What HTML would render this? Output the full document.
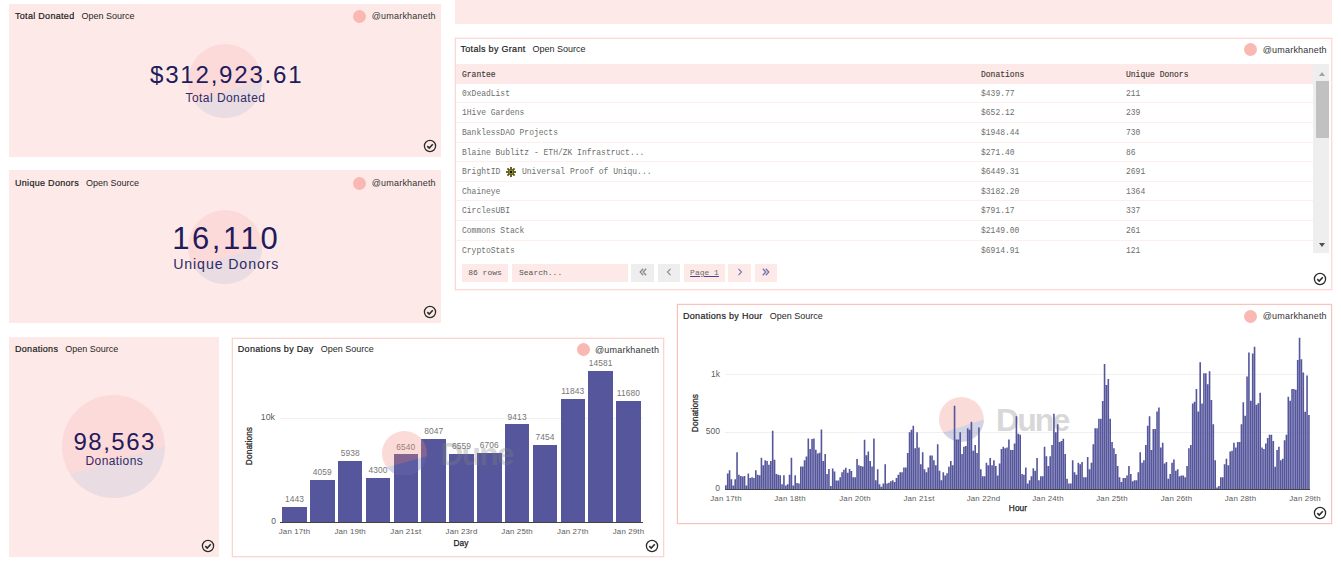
<!DOCTYPE html><html><head><meta charset="utf-8"><style>
*{margin:0;padding:0}
html,body{width:1341px;height:574px;overflow:hidden;background:#fff;position:relative;font-family:"Liberation Sans",sans-serif}
div,svg{position:absolute}
.pk{background:#fdeae8}
.wc{background:#fff;border:1px solid #fbd3d0}
.t{font-size:9px;line-height:12px;color:#1a1a1a;white-space:nowrap}
.t b{font-weight:normal;font-size:9px;color:#1c1c1c;-webkit-text-stroke:0.2px #1c1c1c;letter-spacing:0.3px}
.t .os{margin-left:7px;color:#1f1f1f}
.au{font-size:9px;line-height:12px;color:#333;letter-spacing:0.2px;white-space:nowrap;display:flex;align-items:center}
.au i{display:inline-block;width:13px;height:13px;border-radius:50%;background:#f9b8b1;margin-right:5.5px}
.num{text-align:center;color:#1f1b5c;white-space:nowrap;line-height:1}
.lab{text-align:center;color:#2f2b66;white-space:nowrap;line-height:1}
.th{font-family:"Liberation Mono",monospace;font-size:9px;line-height:10px;margin-top:-4.2px;color:#3d3835;-webkit-text-stroke:0.15px #3d3835;white-space:nowrap;transform:scaleX(0.89);transform-origin:0 50%}
.td{font-family:"Liberation Mono",monospace;font-size:9.2px;line-height:10px;margin-top:-4.4px;color:#6e6e6e;white-space:nowrap;transform:scaleX(0.87);transform-origin:0 50%}
.thd{background:#fdeae8}
.rl{height:1px;background:#fdefee}
.cb{top:264px;height:18px;box-sizing:border-box;padding-bottom:1.5px;background:#fdeae8;font-family:"Liberation Mono",monospace;font-size:8px;color:#555;display:flex;align-items:center;justify-content:center;white-space:nowrap}
.cb.g{background:#eeeeee;color:#777;font-size:13px}
.cb u{color:#6a6a6a;text-decoration-color:#4a4590;text-decoration-thickness:1.3px}
.gl{height:1px;background:#f0f0f0}
.ax{height:1px;background:#444}
.bar{background:#55569c}
.vl{width:40px;text-align:center;font-size:8.4px;line-height:10px;color:#767676;letter-spacing:0.1px}
.yl{text-align:right;font-size:8.5px;line-height:10px;color:#5c5c5c}
.xl{width:60px;text-align:center;font-size:7.9px;line-height:10px;color:#5c5c5c;letter-spacing:0.15px}
.axt{text-align:center;font-size:8.3px;line-height:10px;color:#222;-webkit-text-stroke:0.25px #222;letter-spacing:0.1px}
.rot{transform:rotate(-90deg)}
.wm{color:#808080;font-weight:bold;font-size:32px;letter-spacing:-1.9px;line-height:1}
.ck{position:absolute}
</style></head><body><div class="pk" style="left:9px;top:4px;width:431.5px;height:153px"></div><svg style="position:absolute;left:187.75px;top:43.5px;opacity:1.0" width="74" height="74" viewBox="187.75 43.5 74 74"><circle cx="224.75" cy="80.5" r="37" fill="#fcdad9"/><path d="M193.72 100.65 A37 37 0 0 0 261.74 79.85 Z" fill="#e9dce3"/></svg><div class="t" style="left:15px;top:9.6px"><b>Total Donated</b><span class="os">Open Source</span></div><div class="au" style="right:905.2px;top:9.6px"><i></i>@umarkhaneth</div><div class="num" style="left:150px;top:62.6px;font-size:24.1px;letter-spacing:1.76px">$312,923.61</div><div class="lab" style="left:185.5px;top:91.5px;font-size:12px;letter-spacing:0.45px">Total Donated</div><svg class="ck" style="left:422.9px;top:138.8px" width="14" height="14" viewBox="0 0 14 14"><circle cx="7" cy="7" r="5.6" fill="none" stroke="#2b2b2b" stroke-width="1.3"/><path d="M4.3 7.2 L6.2 9 L9.8 5.2" fill="none" stroke="#2b2b2b" stroke-width="1.6"/></svg><div class="pk" style="left:9px;top:170.3px;width:431.5px;height:153px"></div><svg style="position:absolute;left:187.75px;top:209.8px;opacity:1.0" width="74" height="74" viewBox="187.75 209.8 74 74"><circle cx="224.75" cy="246.8" r="37" fill="#fcdad9"/><path d="M193.72 266.95 A37 37 0 0 0 261.74 246.15 Z" fill="#e9dce3"/></svg><div class="t" style="left:15px;top:176.70000000000002px"><b>Unique Donors</b><span class="os">Open Source</span></div><div class="au" style="right:905.2px;top:176.70000000000002px"><i></i>@umarkhaneth</div><div class="num" style="left:172.2px;top:223.4px;font-size:31px;letter-spacing:2.6px">16,110</div><div class="lab" style="left:173.2px;top:256.7px;font-size:14.2px;letter-spacing:0.88px">Unique Donors</div><svg class="ck" style="left:422.9px;top:305.1px" width="14" height="14" viewBox="0 0 14 14"><circle cx="7" cy="7" r="5.6" fill="none" stroke="#2b2b2b" stroke-width="1.3"/><path d="M4.3 7.2 L6.2 9 L9.8 5.2" fill="none" stroke="#2b2b2b" stroke-width="1.6"/></svg><div class="pk" style="left:9px;top:337px;width:209.8px;height:219.8px"></div><svg style="position:absolute;left:62.400000000000006px;top:395.4px;opacity:1.0" width="103.0" height="103.0" viewBox="62.400000000000006 395.4 103.0 103.0"><circle cx="113.9" cy="446.9" r="51.5" fill="#fcdad9"/><path d="M70.71 474.95 A51.5 51.5 0 0 0 165.39 446.00 Z" fill="#e9dce3"/></svg><div class="t" style="left:15px;top:342.6px"><b>Donations</b><span class="os">Open Source</span></div><div class="num" style="left:73.5px;top:429.5px;font-size:24px;letter-spacing:1.5px">98,563</div><div class="lab" style="left:85.5px;top:454.6px;font-size:12px;letter-spacing:0.4px">Donations</div><svg class="ck" style="left:201.20000000000002px;top:538.5999999999999px" width="14" height="14" viewBox="0 0 14 14"><circle cx="7" cy="7" r="5.6" fill="none" stroke="#2b2b2b" stroke-width="1.3"/><path d="M4.3 7.2 L6.2 9 L9.8 5.2" fill="none" stroke="#2b2b2b" stroke-width="1.6"/></svg><div class="pk" style="left:454.5px;top:0px;width:877.4px;height:23.7px"></div><div class="wc" style="left:454.5px;top:37.5px;width:875px;height:250px;border-color:#fcd9d6;box-shadow:0 0 0 0.6px #fde9e7"></div><div class="t" style="left:460.5px;top:43.1px"><b>Totals by Grant</b><span class="os">Open Source</span></div><div class="au" style="right:14.2px;top:43.1px"><i></i>@umarkhaneth</div><div class="thd" style="left:455.5px;top:64px;width:857.5px;height:20px"></div><div class="th" style="left:462px;top:74px">Grantee</div><div class="th" style="left:981px;top:74px">Donations</div><div class="th" style="left:1126px;top:74px">Unique Donors</div><div class="rl" style="left:455.5px;top:102.3px;width:857.5px"></div><div class="td" style="left:462px;top:93.1px">0xDeadList</div><div class="td" style="left:981px;top:93.1px">$439.77</div><div class="td" style="left:1126px;top:93.1px">211</div><div class="rl" style="left:455.5px;top:121.9px;width:857.5px"></div><div class="td" style="left:462px;top:112.7px">1Hive Gardens</div><div class="td" style="left:981px;top:112.7px">$652.12</div><div class="td" style="left:1126px;top:112.7px">239</div><div class="rl" style="left:455.5px;top:141.5px;width:857.5px"></div><div class="td" style="left:462px;top:132.3px">BanklessDAO Projects</div><div class="td" style="left:981px;top:132.3px">$1948.44</div><div class="td" style="left:1126px;top:132.3px">730</div><div class="rl" style="left:455.5px;top:161.1px;width:857.5px"></div><div class="td" style="left:462px;top:151.9px">Blaine Bublitz - ETH/ZK Infrastruct...</div><div class="td" style="left:981px;top:151.9px">$271.40</div><div class="td" style="left:1126px;top:151.9px">86</div><div class="rl" style="left:455.5px;top:180.7px;width:857.5px"></div><div class="td" style="left:462px;top:171.5px">BrightID</div><svg style="left:506px;top:166.6px" width="10" height="10" viewBox="0 0 10 10"><rect x="4.1" y="0" width="1.8" height="2.6" fill="#55501a" transform="rotate(0 5 5)"/><rect x="4.1" y="0" width="1.8" height="2.6" fill="#55501a" transform="rotate(45 5 5)"/><rect x="4.1" y="0" width="1.8" height="2.6" fill="#55501a" transform="rotate(90 5 5)"/><rect x="4.1" y="0" width="1.8" height="2.6" fill="#55501a" transform="rotate(135 5 5)"/><rect x="4.1" y="0" width="1.8" height="2.6" fill="#55501a" transform="rotate(180 5 5)"/><rect x="4.1" y="0" width="1.8" height="2.6" fill="#55501a" transform="rotate(225 5 5)"/><rect x="4.1" y="0" width="1.8" height="2.6" fill="#55501a" transform="rotate(270 5 5)"/><rect x="4.1" y="0" width="1.8" height="2.6" fill="#55501a" transform="rotate(315 5 5)"/><circle cx="5" cy="5" r="3.1" fill="#5a5518"/><circle cx="5" cy="5" r="2.2" fill="#9c9a2a"/><circle cx="5" cy="5" r="1.2" fill="#111"/></svg><div class="td" style="left:521.5px;top:171.5px">Universal Proof of Uniqu...</div><div class="td" style="left:981px;top:171.5px">$6449.31</div><div class="td" style="left:1126px;top:171.5px">2691</div><div class="rl" style="left:455.5px;top:200.3px;width:857.5px"></div><div class="td" style="left:462px;top:191.1px">Chaineye</div><div class="td" style="left:981px;top:191.1px">$3182.20</div><div class="td" style="left:1126px;top:191.1px">1364</div><div class="rl" style="left:455.5px;top:219.9px;width:857.5px"></div><div class="td" style="left:462px;top:210.7px">CirclesUBI</div><div class="td" style="left:981px;top:210.7px">$791.17</div><div class="td" style="left:1126px;top:210.7px">337</div><div class="rl" style="left:455.5px;top:239.5px;width:857.5px"></div><div class="td" style="left:462px;top:230.3px">Commons Stack</div><div class="td" style="left:981px;top:230.3px">$2149.00</div><div class="td" style="left:1126px;top:230.3px">261</div><div class="td" style="left:462px;top:249.9px">CryptoStats</div><div class="td" style="left:981px;top:249.9px">$6914.91</div><div class="td" style="left:1126px;top:249.9px">121</div><div style="position:absolute;left:1313px;top:64px;width:16px;height:189px;background:#eeeeee"></div><div style="position:absolute;left:1316px;top:81px;width:13px;height:57px;background:#c1c1c1"></div><div style="position:absolute;left:1319px;top:71.5px;width:0;height:0;border-left:3.5px solid transparent;border-right:3.5px solid transparent;border-bottom:4px solid #a3a3a3"></div><div style="position:absolute;left:1319px;top:242.5px;width:0;height:0;border-left:3.5px solid transparent;border-right:3.5px solid transparent;border-top:4px solid #505050"></div><div class="cb" style="left:462px;width:46px">86 rows</div><div class="cb" style="left:512px;width:116px;justify-content:flex-start;padding-left:7px;box-sizing:border-box">Search...</div><div class="cb g" style="left:631px;width:23px"><svg style="position:static" width="8" height="8" viewBox="0 0 8 8"><path d="M4.2 0.8 L1.2 4 L4.2 7.2 M7.2 0.8 L4.2 4 L7.2 7.2" fill="none" stroke="#8a8a8a" stroke-width="1.3"/></svg></div><div class="cb g" style="left:658px;width:22px"><svg style="position:static" width="8" height="8" viewBox="0 0 8 8"><path d="M5.5 0.8 L2.5 4 L5.5 7.2" fill="none" stroke="#8a8a8a" stroke-width="1.1"/></svg></div><div class="cb" style="left:684px;width:41px"><u>Page 1</u></div><div class="cb" style="left:728px;width:23px"><svg style="position:static" width="8" height="8" viewBox="0 0 8 8"><path d="M2.5 0.8 L5.5 4 L2.5 7.2" fill="none" stroke="#7470b0" stroke-width="1.1"/></svg></div><div class="cb" style="left:755px;width:22px"><svg style="position:static" width="8" height="8" viewBox="0 0 8 8"><path d="M0.8 0.8 L3.8 4 L0.8 7.2 M3.8 0.8 L6.8 4 L3.8 7.2" fill="none" stroke="#7470b0" stroke-width="1.3"/></svg></div><svg class="ck" style="left:1313.4px;top:271.7px" width="14" height="14" viewBox="0 0 14 14"><circle cx="7" cy="7" r="5.6" fill="none" stroke="#2b2b2b" stroke-width="1.3"/><path d="M4.3 7.2 L6.2 9 L9.8 5.2" fill="none" stroke="#2b2b2b" stroke-width="1.6"/></svg><div class="wc" style="left:231.8px;top:337.7px;width:430px;height:217px;border-color:#fbd3cf;box-shadow:0 0 0 0.6px #fde9e7"></div><div class="t" style="left:237.8px;top:343.3px"><b>Donations by Day</b><span class="os">Open Source</span></div><div class="au" style="right:681.9000000000001px;top:343.3px"><i></i>@umarkhaneth</div><div class="gl" style="left:280px;top:418.4px;width:363px"></div><div class="bar" style="left:282.30px;top:507.22px;width:24.4px;height:14.98px"></div><div class="vl" style="left:274.50px;top:494.42px">1443</div><div class="bar" style="left:310.13px;top:480.07px;width:24.4px;height:42.13px"></div><div class="vl" style="left:302.33px;top:467.27px">4059</div><div class="bar" style="left:337.96px;top:460.56px;width:24.4px;height:61.64px"></div><div class="vl" style="left:330.16px;top:447.76px">5938</div><div class="bar" style="left:365.79px;top:477.57px;width:24.4px;height:44.63px"></div><div class="vl" style="left:357.99px;top:464.77px">4300</div><div class="bar" style="left:393.62px;top:454.31px;width:24.4px;height:67.89px"></div><div class="vl" style="left:385.82px;top:441.51px">6540</div><div class="bar" style="left:421.45px;top:438.67px;width:24.4px;height:83.53px"></div><div class="vl" style="left:413.65px;top:425.87px">8047</div><div class="bar" style="left:449.28px;top:454.12px;width:24.4px;height:68.08px"></div><div class="vl" style="left:441.48px;top:441.32px">6559</div><div class="bar" style="left:477.11px;top:452.59px;width:24.4px;height:69.61px"></div><div class="vl" style="left:469.31px;top:439.79px">6706</div><div class="bar" style="left:504.94px;top:424.49px;width:24.4px;height:97.71px"></div><div class="vl" style="left:497.14px;top:411.69px">9413</div><div class="bar" style="left:532.77px;top:444.83px;width:24.4px;height:77.37px"></div><div class="vl" style="left:524.97px;top:432.03px">7454</div><div class="bar" style="left:560.60px;top:399.27px;width:24.4px;height:122.93px"></div><div class="vl" style="left:552.80px;top:386.47px">11843</div><div class="bar" style="left:588.43px;top:370.85px;width:24.4px;height:151.35px"></div><div class="vl" style="left:580.63px;top:358.05px">14581</div><div class="bar" style="left:616.26px;top:400.96px;width:24.4px;height:121.24px"></div><div class="vl" style="left:608.46px;top:388.16px">11680</div><div style="left:0;top:0;width:1341px;height:574px;opacity:0.3"><svg style="position:absolute;left:381.90000000000003px;top:430.70000000000005px;opacity:1.0" width="44.8" height="44.8" viewBox="381.90000000000003 430.70000000000005 44.8 44.8"><circle cx="404.3" cy="453.1" r="22.4" fill="#f28a7d"/><path d="M386.65 466.89 A22.4 22.4 0 0 0 426.53 455.83 Z" fill="#7070b0"/></svg><div class="wm" style="left:440.3px;top:437.5px">Dune</div></div><div class="ax" style="left:280px;top:522.2px;width:363px"></div><div class="yl" style="left:262px;top:516.2px;width:14px">0</div><div class="yl" style="left:250px;top:412.4px;width:25px;font-size:8.8px">10k</div><div class="xl" style="left:264.5px;top:526.6px">Jan 17th</div><div class="xl" style="left:320.2px;top:526.6px">Jan 19th</div><div class="xl" style="left:375.8px;top:526.6px">Jan 21st</div><div class="xl" style="left:431.5px;top:526.6px">Jan 23rd</div><div class="xl" style="left:487.1px;top:526.6px">Jan 25th</div><div class="xl" style="left:542.8px;top:526.6px">Jan 27th</div><div class="xl" style="left:598.5px;top:526.6px">Jan 29th</div><div class="axt" style="left:431px;top:538px;width:60px">Day</div><div class="axt rot" style="left:219px;top:441px;width:60px">Donations</div><svg class="ck" style="left:645.4px;top:539.2px" width="14" height="14" viewBox="0 0 14 14"><circle cx="7" cy="7" r="5.6" fill="none" stroke="#2b2b2b" stroke-width="1.3"/><path d="M4.3 7.2 L6.2 9 L9.8 5.2" fill="none" stroke="#2b2b2b" stroke-width="1.6"/></svg><div class="wc" style="left:677px;top:304.3px;width:652.5px;height:217.8px;border-color:#f9c3bd;box-shadow:0 0 0 0.5px #fde3e0"></div><div class="t" style="left:683px;top:309.90000000000003px"><b>Donations by Hour</b><span class="os">Open Source</span></div><div class="au" style="right:14.2px;top:309.90000000000003px"><i></i>@umarkhaneth</div><div class="gl" style="left:725px;top:431.6px;width:585px"></div><div class="gl" style="left:725px;top:374.3px;width:585px"></div><div style="left:0;top:0;width:1341px;height:574px;opacity:0.3"><svg style="position:absolute;left:939.2px;top:397.1px;opacity:1.0" width="44.8" height="44.8" viewBox="939.2 397.1 44.8 44.8"><circle cx="961.6" cy="419.5" r="22.4" fill="#f28a7d"/><path d="M943.48 432.67 A22.4 22.4 0 0 0 984.00 419.50 Z" fill="#7070b0"/></svg><div class="wm" style="left:996px;top:404.3px">Dune</div></div><svg style="position:absolute;left:725px;top:318.8px" width="585" height="170" viewBox="0 0 585 170"><path d="M0.00 166.15h1.61V170h-1.61zM1.88 154.50h1.61V170h-1.61zM3.75 151.36h1.61V170h-1.61zM5.62 160.13h1.61V170h-1.61zM7.50 166.40h1.61V170h-1.61zM9.38 160.13h1.61V170h-1.61zM11.25 133.18h1.61V170h-1.61zM13.12 155.74h1.61V170h-1.61zM15.00 157.00h1.61V170h-1.61zM16.88 157.62h1.61V170h-1.61zM18.75 157.00h1.61V170h-1.61zM20.62 166.40h1.61V170h-1.61zM22.50 154.50h1.61V170h-1.61zM24.38 158.88h1.61V170h-1.61zM26.25 158.25h1.61V170h-1.61zM28.12 158.88h1.61V170h-1.61zM30.00 151.36h1.61V170h-1.61zM31.88 155.74h1.61V170h-1.61zM33.75 156.37h1.61V170h-1.61zM35.62 138.82h1.61V170h-1.61zM37.50 146.34h1.61V170h-1.61zM39.38 141.33h1.61V170h-1.61zM41.25 141.95h1.61V170h-1.61zM43.12 145.71h1.61V170h-1.61zM45.00 141.95h1.61V170h-1.61zM46.88 111.86h1.61V170h-1.61zM48.75 140.70h1.61V170h-1.61zM50.62 155.12h1.61V170h-1.61zM52.50 155.74h1.61V170h-1.61zM54.38 156.37h1.61V170h-1.61zM56.25 165.15h1.61V170h-1.61zM58.12 156.37h1.61V170h-1.61zM60.00 166.40h1.61V170h-1.61zM61.88 165.15h1.61V170h-1.61zM63.75 155.74h1.61V170h-1.61zM65.62 138.82h1.61V170h-1.61zM67.50 166.40h1.61V170h-1.61zM69.38 156.37h1.61V170h-1.61zM71.25 163.90h1.61V170h-1.61zM73.12 164.53h1.61V170h-1.61zM75.00 147.59h1.61V170h-1.61zM76.88 147.59h1.61V170h-1.61zM78.75 141.33h1.61V170h-1.61zM80.62 137.56h1.61V170h-1.61zM82.50 119.38h1.61V170h-1.61zM84.38 130.04h1.61V170h-1.61zM86.25 120.01h1.61V170h-1.61zM88.12 119.38h1.61V170h-1.61zM90.00 130.67h1.61V170h-1.61zM91.88 134.42h1.61V170h-1.61zM93.75 133.81h1.61V170h-1.61zM95.62 110.61h1.61V170h-1.61zM97.50 141.95h1.61V170h-1.61zM99.38 135.05h1.61V170h-1.61zM101.25 155.12h1.61V170h-1.61zM103.12 150.10h1.61V170h-1.61zM105.00 167.03h1.61V170h-1.61zM106.88 149.47h1.61V170h-1.61zM108.75 152.61h1.61V170h-1.61zM110.62 161.39h1.61V170h-1.61zM112.50 161.39h1.61V170h-1.61zM114.38 158.25h1.61V170h-1.61zM116.25 153.24h1.61V170h-1.61zM118.12 150.73h1.61V170h-1.61zM120.00 148.85h1.61V170h-1.61zM121.88 153.87h1.61V170h-1.61zM123.75 150.10h1.61V170h-1.61zM125.62 151.99h1.61V170h-1.61zM127.50 158.25h1.61V170h-1.61zM129.38 158.25h1.61V170h-1.61zM131.25 140.07h1.61V170h-1.61zM133.12 146.34h1.61V170h-1.61zM135.00 146.96h1.61V170h-1.61zM136.88 147.59h1.61V170h-1.61zM138.75 120.64h1.61V170h-1.61zM140.62 136.31h1.61V170h-1.61zM142.50 132.55h1.61V170h-1.61zM144.38 141.95h1.61V170h-1.61zM146.25 147.59h1.61V170h-1.61zM148.12 119.38h1.61V170h-1.61zM150.00 161.36h1.61V170h-1.61zM151.88 150.13h1.61V170h-1.61zM153.75 165.36h1.61V170h-1.61zM155.62 167.78h1.61V170h-1.61zM157.50 164.56h1.61V170h-1.61zM159.38 145.33h1.61V170h-1.61zM161.25 164.56h1.61V170h-1.61zM163.12 163.76h1.61V170h-1.61zM165.00 162.16h1.61V170h-1.61zM166.88 161.36h1.61V170h-1.61zM168.75 162.96h1.61V170h-1.61zM170.62 158.95h1.61V170h-1.61zM172.50 155.74h1.61V170h-1.61zM174.38 153.34h1.61V170h-1.61zM176.25 153.34h1.61V170h-1.61zM178.12 148.53h1.61V170h-1.61zM180.00 148.53h1.61V170h-1.61zM181.88 134.10h1.61V170h-1.61zM183.75 113.27h1.61V170h-1.61zM185.62 110.86h1.61V170h-1.61zM187.50 106.85h1.61V170h-1.61zM189.38 129.30h1.61V170h-1.61zM191.25 113.27h1.61V170h-1.61zM193.12 128.49h1.61V170h-1.61zM195.00 145.33h1.61V170h-1.61zM196.88 133.30h1.61V170h-1.61zM198.75 150.13h1.61V170h-1.61zM200.62 153.34h1.61V170h-1.61zM202.50 148.53h1.61V170h-1.61zM204.38 136.51h1.61V170h-1.61zM206.25 136.51h1.61V170h-1.61zM208.12 141.32h1.61V170h-1.61zM210.00 146.13h1.61V170h-1.61zM211.88 125.29h1.61V170h-1.61zM213.75 151.74h1.61V170h-1.61zM215.62 161.36h1.61V170h-1.61zM217.50 153.34h1.61V170h-1.61zM219.38 156.55h1.61V170h-1.61zM221.25 154.14h1.61V170h-1.61zM223.12 147.73h1.61V170h-1.61zM225.00 142.12h1.61V170h-1.61zM226.88 146.13h1.61V170h-1.61zM228.75 86.82h1.61V170h-1.61zM230.62 120.48h1.61V170h-1.61zM232.50 120.48h1.61V170h-1.61zM234.38 113.27h1.61V170h-1.61zM236.25 134.91h1.61V170h-1.61zM238.12 127.69h1.61V170h-1.61zM240.00 126.89h1.61V170h-1.61zM241.88 109.26h1.61V170h-1.61zM243.75 110.86h1.61V170h-1.61zM245.62 102.85h1.61V170h-1.61zM247.50 131.70h1.61V170h-1.61zM249.38 126.09h1.61V170h-1.61zM251.25 134.10h1.61V170h-1.61zM253.12 108.46h1.61V170h-1.61zM255.00 150.13h1.61V170h-1.61zM256.88 157.35h1.61V170h-1.61zM258.75 157.35h1.61V170h-1.61zM260.62 143.72h1.61V170h-1.61zM262.50 146.13h1.61V170h-1.61zM264.38 138.91h1.61V170h-1.61zM266.25 146.13h1.61V170h-1.61zM268.12 141.32h1.61V170h-1.61zM270.00 146.93h1.61V170h-1.61zM271.88 156.55h1.61V170h-1.61zM273.75 144.52h1.61V170h-1.61zM275.62 130.10h1.61V170h-1.61zM277.50 127.69h1.61V170h-1.61zM279.38 129.30h1.61V170h-1.61zM281.25 128.49h1.61V170h-1.61zM283.12 120.48h1.61V170h-1.61zM285.00 130.90h1.61V170h-1.61zM286.88 130.90h1.61V170h-1.61zM288.75 124.49h1.61V170h-1.61zM290.62 97.24h1.61V170h-1.61zM292.50 114.87h1.61V170h-1.61zM294.38 115.67h1.61V170h-1.61zM296.25 154.94h1.61V170h-1.61zM298.12 155.74h1.61V170h-1.61zM300.00 148.53h1.61V170h-1.61zM301.88 164.56h1.61V170h-1.61zM303.75 161.36h1.61V170h-1.61zM305.62 157.35h1.61V170h-1.61zM307.50 149.33h1.61V170h-1.61zM309.38 151.74h1.61V170h-1.61zM311.25 138.91h1.61V170h-1.61zM313.12 161.36h1.61V170h-1.61zM315.00 157.35h1.61V170h-1.61zM316.88 157.35h1.61V170h-1.61zM318.75 127.69h1.61V170h-1.61zM320.62 137.31h1.61V170h-1.61zM322.50 146.93h1.61V170h-1.61zM324.38 137.31h1.61V170h-1.61zM326.25 126.09h1.61V170h-1.61zM328.12 94.83h1.61V170h-1.61zM330.00 113.27h1.61V170h-1.61zM331.88 105.25h1.61V170h-1.61zM333.75 122.88h1.61V170h-1.61zM335.62 122.08h1.61V170h-1.61zM337.50 119.68h1.61V170h-1.61zM339.38 134.91h1.61V170h-1.61zM341.25 159.75h1.61V170h-1.61zM343.12 164.56h1.61V170h-1.61zM345.00 164.56h1.61V170h-1.61zM346.88 141.32h1.61V170h-1.61zM348.75 153.34h1.61V170h-1.61zM350.62 155.74h1.61V170h-1.61zM352.50 143.72h1.61V170h-1.61zM354.38 145.33h1.61V170h-1.61zM356.25 142.92h1.61V170h-1.61zM358.12 158.15h1.61V170h-1.61zM360.00 158.15h1.61V170h-1.61zM361.88 138.11h1.61V170h-1.61zM363.75 150.13h1.61V170h-1.61zM365.62 143.72h1.61V170h-1.61zM367.50 125.29h1.61V170h-1.61zM369.38 109.26h1.61V170h-1.61zM371.25 109.26h1.61V170h-1.61zM373.12 99.80h1.61V170h-1.61zM375.00 99.64h1.61V170h-1.61zM376.88 82.10h1.61V170h-1.61zM378.75 44.90h1.61V170h-1.61zM380.62 66.10h1.61V170h-1.61zM382.50 60.10h1.61V170h-1.61zM384.38 99.64h1.61V170h-1.61zM386.25 122.88h1.61V170h-1.61zM388.12 129.30h1.61V170h-1.61zM390.00 134.91h1.61V170h-1.61zM391.88 146.93h1.61V170h-1.61zM393.75 158.15h1.61V170h-1.61zM395.62 162.96h1.61V170h-1.61zM397.50 158.95h1.61V170h-1.61zM399.38 158.95h1.61V170h-1.61zM401.25 156.55h1.61V170h-1.61zM403.12 146.93h1.61V170h-1.61zM405.00 154.94h1.61V170h-1.61zM406.88 162.16h1.61V170h-1.61zM408.75 161.36h1.61V170h-1.61zM410.62 161.36h1.61V170h-1.61zM412.50 153.34h1.61V170h-1.61zM414.38 133.30h1.61V170h-1.61zM416.25 143.72h1.61V170h-1.61zM418.12 141.32h1.61V170h-1.61zM420.00 126.09h1.61V170h-1.61zM421.88 106.85h1.61V170h-1.61zM423.75 97.24h1.61V170h-1.61zM425.62 130.90h1.61V170h-1.61zM427.50 110.06h1.61V170h-1.61zM429.38 110.06h1.61V170h-1.61zM431.25 92.43h1.61V170h-1.61zM433.12 88.42h1.61V170h-1.61zM435.00 128.49h1.61V170h-1.61zM436.88 123.68h1.61V170h-1.61zM438.75 144.52h1.61V170h-1.61zM440.62 142.92h1.61V170h-1.61zM442.50 159.75h1.61V170h-1.61zM444.38 154.94h1.61V170h-1.61zM446.25 143.72h1.61V170h-1.61zM448.12 140.52h1.61V170h-1.61zM450.00 151.74h1.61V170h-1.61zM451.88 150.13h1.61V170h-1.61zM453.75 157.35h1.61V170h-1.61zM455.62 156.55h1.61V170h-1.61zM457.50 156.55h1.61V170h-1.61zM459.38 158.15h1.61V170h-1.61zM461.25 146.93h1.61V170h-1.61zM463.12 129.30h1.61V170h-1.61zM465.00 126.09h1.61V170h-1.61zM466.88 84.41h1.61V170h-1.61zM468.75 82.81h1.61V170h-1.61zM470.62 70.02h1.61V170h-1.61zM472.50 92.43h1.61V170h-1.61zM474.38 43.35h1.61V170h-1.61zM476.25 84.41h1.61V170h-1.61zM478.12 54.33h1.61V170h-1.61zM480.00 54.33h1.61V170h-1.61zM481.88 65.31h1.61V170h-1.61zM483.75 52.29h1.61V170h-1.61zM485.62 81.00h1.61V170h-1.61zM487.50 105.25h1.61V170h-1.61zM489.38 141.32h1.61V170h-1.61zM491.25 168.58h1.61V170h-1.61zM493.12 166.98h1.61V170h-1.61zM495.00 158.15h1.61V170h-1.61zM496.88 158.15h1.61V170h-1.61zM498.75 145.33h1.61V170h-1.61zM500.62 139.71h1.61V170h-1.61zM502.50 146.13h1.61V170h-1.61zM504.38 132.50h1.61V170h-1.61zM506.25 131.70h1.61V170h-1.61zM508.12 123.68h1.61V170h-1.61zM510.00 128.49h1.61V170h-1.61zM511.88 122.88h1.61V170h-1.61zM513.75 122.88h1.61V170h-1.61zM515.62 105.25h1.61V170h-1.61zM517.50 83.36h1.61V170h-1.61zM519.38 96.69h1.61V170h-1.61zM521.25 57.47h1.61V170h-1.61zM523.12 33.47h1.61V170h-1.61zM525.00 81.79h1.61V170h-1.61zM526.88 34.42h1.61V170h-1.61zM528.75 27.67h1.61V170h-1.61zM530.62 85.71h1.61V170h-1.61zM532.50 84.14h1.61V170h-1.61zM534.38 73.64h1.61V170h-1.61zM536.25 128.49h1.61V170h-1.61zM538.12 130.10h1.61V170h-1.61zM540.00 124.49h1.61V170h-1.61zM541.88 118.88h1.61V170h-1.61zM543.75 115.67h1.61V170h-1.61zM545.62 115.67h1.61V170h-1.61zM547.50 122.08h1.61V170h-1.61zM549.38 147.73h1.61V170h-1.61zM551.25 130.90h1.61V170h-1.61zM553.12 127.69h1.61V170h-1.61zM555.00 141.32h1.61V170h-1.61zM556.88 139.71h1.61V170h-1.61zM558.75 121.28h1.61V170h-1.61zM560.62 115.67h1.61V170h-1.61zM562.50 77.86h1.61V170h-1.61zM564.38 81.79h1.61V170h-1.61zM566.25 70.02h1.61V170h-1.61zM568.12 70.02h1.61V170h-1.61zM570.00 70.81h1.61V170h-1.61zM571.88 41.00h1.61V170h-1.61zM573.75 18.73h1.61V170h-1.61zM575.62 40.21h1.61V170h-1.61zM577.50 53.55h1.61V170h-1.61zM579.38 92.77h1.61V170h-1.61zM581.25 56.38h1.61V170h-1.61zM583.12 95.91h1.61V170h-1.61z" fill="#55569c"/></svg><div class="ax" style="left:725px;top:488.8px;width:585px"></div><div class="yl" style="left:700px;top:482.8px;width:20px">0</div><div class="yl" style="left:696px;top:425.6px;width:24px">500</div><div class="yl" style="left:696px;top:368.8px;width:24px">1k</div><div class="xl" style="left:696.0px;top:493.6px">Jan 17th</div><div class="xl" style="left:760.0px;top:493.6px">Jan 18th</div><div class="xl" style="left:825.0px;top:493.6px">Jan 20th</div><div class="xl" style="left:889.0px;top:493.6px">Jan 21st</div><div class="xl" style="left:953.5px;top:493.6px">Jan 22nd</div><div class="xl" style="left:1018.0px;top:493.6px">Jan 24th</div><div class="xl" style="left:1082.0px;top:493.6px">Jan 25th</div><div class="xl" style="left:1146.5px;top:493.6px">Jan 26th</div><div class="xl" style="left:1210.5px;top:493.6px">Jan 28th</div><div class="xl" style="left:1275.0px;top:493.6px">Jan 29th</div><div class="axt" style="left:988px;top:503px;width:60px">Hour</div><div class="axt rot" style="left:665px;top:408px;width:60px">Donations</div><svg class="ck" style="left:1313px;top:505.79999999999995px" width="14" height="14" viewBox="0 0 14 14"><circle cx="7" cy="7" r="5.6" fill="none" stroke="#2b2b2b" stroke-width="1.3"/><path d="M4.3 7.2 L6.2 9 L9.8 5.2" fill="none" stroke="#2b2b2b" stroke-width="1.6"/></svg></body></html>
